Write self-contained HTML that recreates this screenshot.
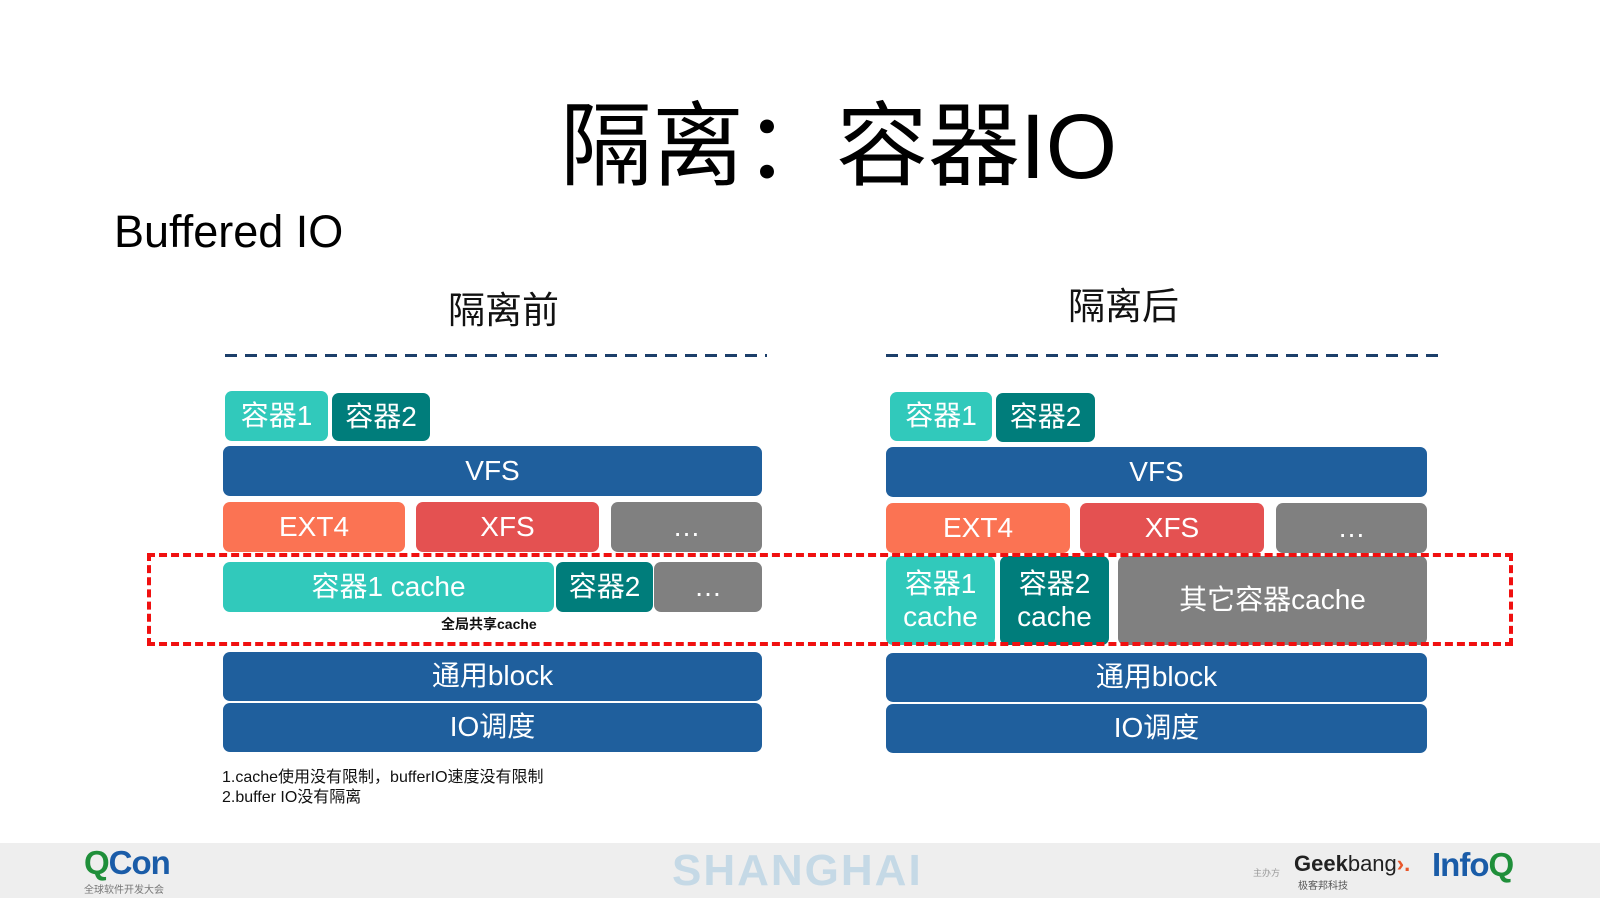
<!DOCTYPE html>
<html><head><meta charset="utf-8"><style>
*{margin:0;padding:0;box-sizing:border-box}
body{width:1600px;height:900px;background:#fff;position:relative;overflow:hidden;font-family:"Liberation Sans","Noto Sans CJK SC",sans-serif}
.a{position:absolute}
.b{position:absolute;border-radius:7px;color:#fff;display:flex;align-items:center;justify-content:center;text-align:center;font-size:28px;line-height:1.15}
.t1{background:#31c9bb}.t2{background:#007d7b}.bl{background:#1f5f9d}.or{background:#fb7353}.rd{background:#e45151}.gr{background:#808080}
.dash{position:absolute;height:3px;background:repeating-linear-gradient(90deg,#1c3f6a 0 12px,transparent 12px 20px)}
</style></head><body>
<div class="a" style="left:560px;top:84px;font-size:92px;line-height:110px;color:#000;font-family:'Noto Sans CJK SC',sans-serif">隔离：容器<span style="font-family:'Liberation Sans'">IO</span></div>
<div class="a" style="left:114px;top:204px;font-size:45px;line-height:56px;color:#000">Buffered IO</div>
<div class="a" style="left:448px;top:288px;font-size:37px;line-height:46px;color:#111">隔离前</div>
<div class="a" style="left:1068px;top:284px;font-size:37px;line-height:46px;color:#111">隔离后</div>
<div class="dash" style="left:225px;top:354px;width:542px"></div>
<div class="dash" style="left:886px;top:354px;width:552px"></div>

<div class="b t1" style="left:225px;top:391px;width:103px;height:50px">容器1</div>
<div class="b t2" style="left:332px;top:393px;width:98px;height:48px">容器2</div>
<div class="b bl" style="left:223px;top:446px;width:539px;height:50px">VFS</div>
<div class="b or" style="left:223px;top:502px;width:182px;height:50px">EXT4</div>
<div class="b rd" style="left:416px;top:502px;width:183px;height:50px">XFS</div>
<div class="b gr" style="left:611px;top:502px;width:151px;height:50px">…</div>
<div class="b t1" style="left:223px;top:562px;width:331px;height:50px">容器1 cache</div>
<div class="b t2" style="left:556px;top:562px;width:97px;height:50px">容器2</div>
<div class="b gr" style="left:654px;top:562px;width:108px;height:50px">…</div>
<div class="a" style="left:441px;top:614px;font-size:14px;font-weight:bold;color:#111">全局共享cache</div>
<div class="b bl" style="left:223px;top:652px;width:539px;height:49px">通用block</div>
<div class="b bl" style="left:223px;top:703px;width:539px;height:49px">IO调度</div>
<div class="a" style="left:222px;top:768px;font-size:16px;line-height:20px;color:#111">1.cache使用没有限制，bufferIO速度没有限制<br>2.buffer IO没有隔离</div>

<div class="b t1" style="left:890px;top:392px;width:102px;height:49px">容器1</div>
<div class="b t2" style="left:996px;top:393px;width:99px;height:49px">容器2</div>
<div class="b bl" style="left:886px;top:447px;width:541px;height:50px">VFS</div>
<div class="b or" style="left:886px;top:503px;width:184px;height:50px">EXT4</div>
<div class="b rd" style="left:1080px;top:503px;width:184px;height:50px">XFS</div>
<div class="b gr" style="left:1276px;top:503px;width:151px;height:50px">…</div>
<div class="b t1" style="left:886px;top:556px;width:109px;height:89px">容器1<br>cache</div>
<div class="b t2" style="left:1000px;top:556px;width:109px;height:89px">容器2<br>cache</div>
<div class="b gr" style="left:1118px;top:556px;width:309px;height:89px">其它容器cache</div>
<div class="b bl" style="left:886px;top:653px;width:541px;height:49px">通用block</div>
<div class="b bl" style="left:886px;top:704px;width:541px;height:49px">IO调度</div>

<div class="a" style="left:147px;top:553px;width:1366px;height:93px;border:4px dashed #f01010"></div>

<div class="a" style="left:0;top:843px;width:1600px;height:55px;background:#eeeeee"></div>
<div class="a" style="left:84px;top:846px;font-size:33px;font-weight:bold;line-height:34px;letter-spacing:-1px"><span style="color:#1f8f3a">Q</span><span style="color:#1a5ca8">Con</span></div>
<div class="a" style="left:84px;top:881px;font-size:10px;color:#777">全球软件开发大会</div>
<div class="a" style="left:672px;top:848px;font-size:44px;font-weight:bold;color:#c5d9e6;line-height:46px;letter-spacing:2px">SHANGHAI</div>
<div class="a" style="left:1253px;top:866px;font-size:9px;color:#999">主办方</div>
<div class="a" style="left:1294px;top:852px;font-size:22px;font-weight:bold;color:#222;line-height:24px">Geek<span style="font-weight:normal">bang</span><span style="color:#e8562a">›.</span></div>
<div class="a" style="left:1298px;top:877px;font-size:10px;color:#555">极客邦科技</div>
<div class="a" style="left:1432px;top:848px;font-size:33px;font-weight:bold;color:#1a5ca8;line-height:34px;letter-spacing:-1px">Info<span style="color:#1f8f3a">Q</span></div>
</body></html>
